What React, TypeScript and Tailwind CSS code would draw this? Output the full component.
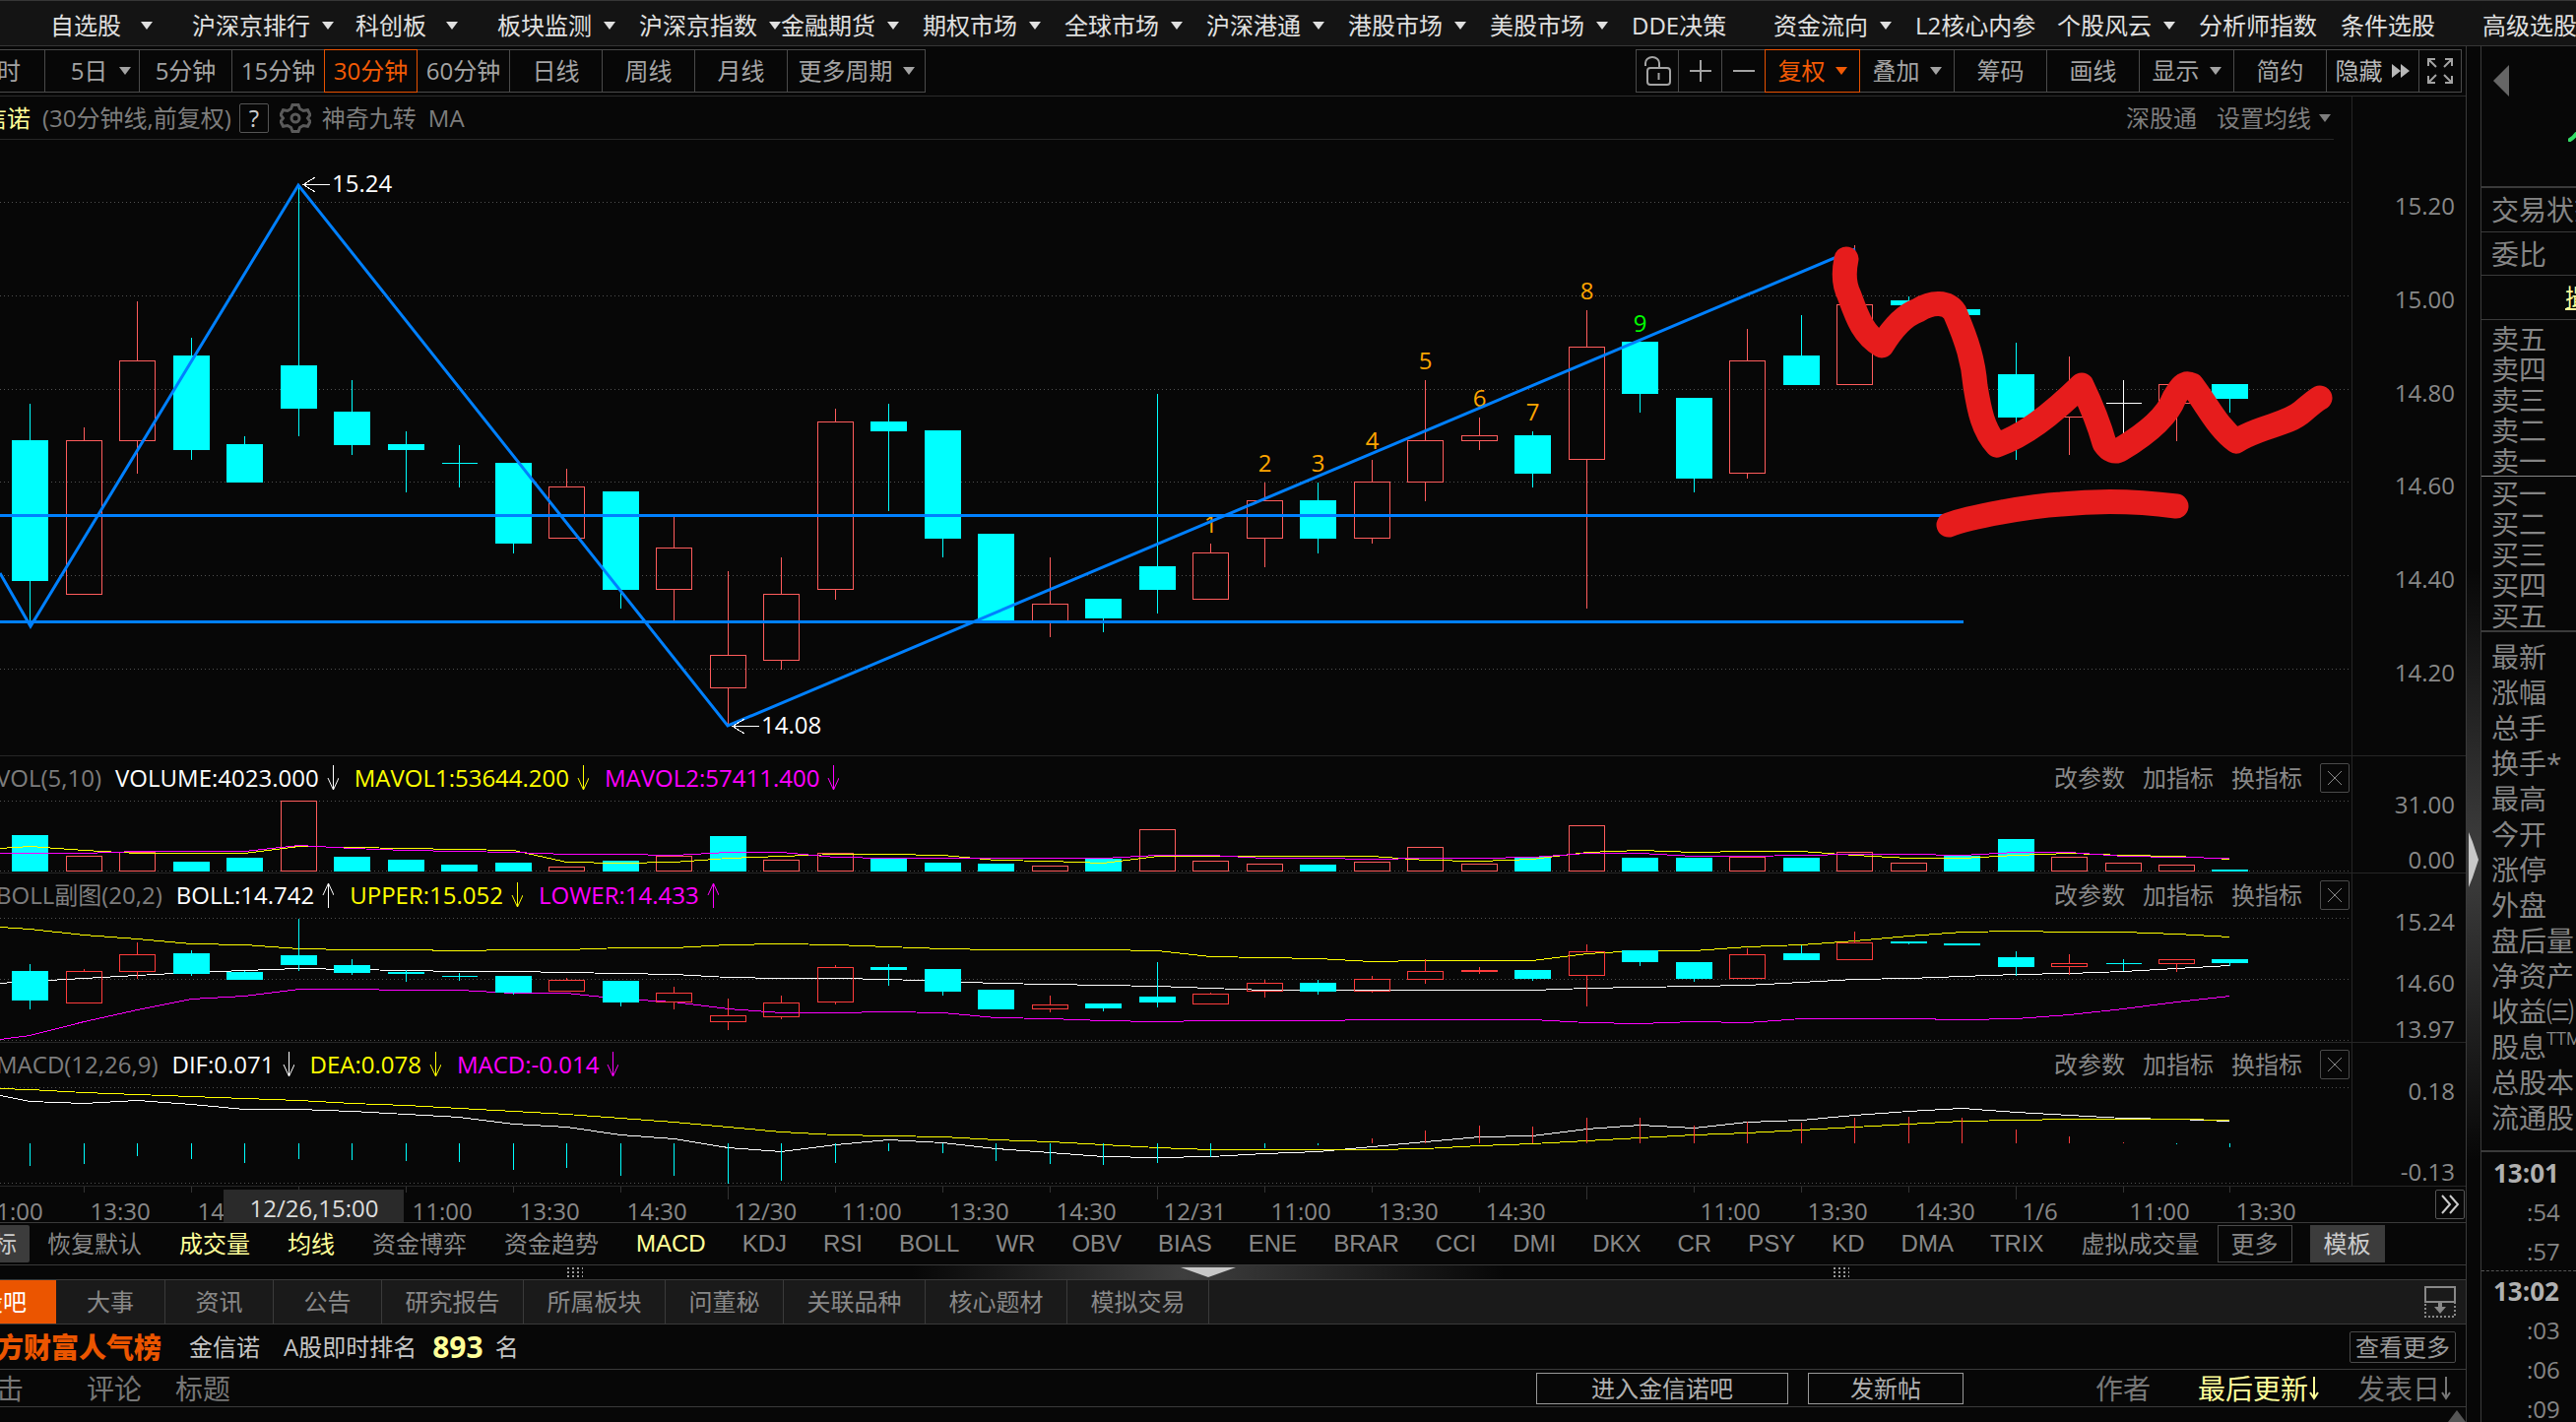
import React from 'react';

type Kind = 'up' | 'down' | 'flat';
type Candle = [Kind, number, number, number, number];

// kind, high, body top, body bottom, low
const CANDLES: Candle[] = [
  ['down', 14.77, 14.69, 14.39, 14.3], ['up', 14.72, 14.69, 14.36, 14.36], ['up', 14.99, 14.86, 14.69, 14.62],
  ['down', 14.91, 14.87, 14.67, 14.65], ['down', 14.7, 14.68, 14.6, 14.6], ['down', 15.24, 14.85, 14.76, 14.7],
  ['down', 14.82, 14.75, 14.68, 14.66], ['down', 14.71, 14.68, 14.67, 14.58], ['down', 14.68, 14.64, 14.64, 14.59],
  ['down', 14.64, 14.64, 14.47, 14.45], ['up', 14.63, 14.59, 14.48, 14.48], ['down', 14.58, 14.58, 14.37, 14.33],
  ['up', 14.53, 14.46, 14.37, 14.3], ['up', 14.41, 14.23, 14.16, 14.08], ['up', 14.44, 14.36, 14.22, 14.2],
  ['up', 14.76, 14.73, 14.37, 14.35], ['down', 14.77, 14.73, 14.71, 14.54], ['down', 14.71, 14.71, 14.48, 14.44],
  ['down', 14.49, 14.49, 14.3, 14.3], ['up', 14.44, 14.34, 14.3, 14.27], ['down', 14.35, 14.35, 14.31, 14.28],
  ['down', 14.79, 14.42, 14.37, 14.32], ['up', 14.47, 14.45, 14.35, 14.35], ['up', 14.6, 14.56, 14.48, 14.42],
  ['down', 14.6, 14.56, 14.48, 14.45], ['up', 14.65, 14.6, 14.48, 14.47], ['up', 14.82, 14.69, 14.6, 14.56],
  ['up', 14.74, 14.7, 14.69, 14.67], ['down', 14.71, 14.7, 14.62, 14.59], ['up', 14.97, 14.89, 14.65, 14.33],
  ['down', 14.9, 14.9, 14.79, 14.75], ['down', 14.78, 14.78, 14.61, 14.58], ['up', 14.93, 14.86, 14.62, 14.61],
  ['down', 14.96, 14.87, 14.81, 14.81], ['up', 15.11, 14.98, 14.81, 14.81], ['down', 15, 14.99, 14.98, 14.97],
  ['down', 14.98, 14.97, 14.96, 14.96], ['down', 14.9, 14.83, 14.74, 14.65], ['up', 14.87, 14.77, 14.74, 14.66],
  ['flat', 14.82, 14.77, 14.77, 14.7], ['up', 14.81, 14.81, 14.77, 14.69], ['down', 14.81, 14.81, 14.78, 14.75],
];

// a negative bar is a falling one
const VOLUMES = [
  -37, 16, 20, -10, -14, 72, -15, -12, -7, -9, 5, -11, 16, -36, 12, 19, -13, -9, -8, 6, -13,
  43, 11, 8, -7, 10, 25, 8, -15, 47, -14, -14, 15, -14, 20, 9, -16, -33, 15, 9, 7, -2,
];
const MAVOL1 = [
  26, 22, 19, 19, 19, 26, 25, 24, 23, 22, 10, 9, 10, 14, 16, 18, 18, 17, 12, 11, 9,
  16, 16, 16, 16, 16, 12, 11, 13, 20, 22, 20, 21, 21, 17, 14, 14, 17, 19, 17, 16, 13,
];
const MAVOL2 = [
  19, 19, 21, 21, 21, 27, 24, 22, 21, 20, 18, 18, 17, 20, 20, 15, 14, 14, 14, 14, 14,
  17, 17, 14, 14, 13, 14, 14, 15, 19, 19, 16, 16, 17, 18, 18, 17, 20, 20, 16, 15, 14,
];

const BOLL_UPPER = [
  12, 18, 22, 27, 28, 32, 33, 33, 34, 33, 33, 31, 31, 28, 27, 28, 30, 32, 33, 33, 33,
  34, 40, 41, 42, 45, 44, 44, 44, 37, 34, 34, 30, 28, 24, 19, 15, 14, 15, 15, 17, 20,
];
const BOLL_MID = [
  65, 62, 59, 56, 54, 52, 53, 54, 55, 55, 56, 57, 58, 61, 62, 62, 63, 65, 67, 68, 69,
  70, 72, 74, 74, 74, 74, 74, 74, 72, 71, 70, 69, 66, 63, 62, 60, 58, 57, 55, 52, 49,
];
const BOLL_LOWER = [
  120, 106, 94, 83, 80, 73, 73, 74, 74, 77, 77, 83, 86, 93, 97, 97, 96, 97, 102, 103, 105,
  106, 105, 105, 105, 104, 104, 104, 104, 107, 108, 106, 107, 103, 103, 103, 104, 103, 99, 93, 86, 80,
];

const DEA = [
  3, 6, 8, 10, 12, 14, 17, 19, 22, 25, 28, 32, 36, 41, 46, 49, 50, 51, 54, 56, 59,
  62, 64, 64, 64, 64, 63, 60, 58, 55, 52, 49, 47, 44, 41, 38, 35, 34, 33, 33, 33, 34,
];
const DIF = [
  15, 17, 14, 18, 23, 23, 25, 28, 31, 38, 41, 49, 53, 62, 66, 59, 54, 57, 63, 67, 71,
  72, 71, 68, 66, 61, 56, 51, 50, 43, 39, 42, 36, 34, 29, 25, 22, 26, 29, 32, 33, 35,
];
const MACD_BARS = [
  -23, -21, -13, -16, -20, -16, -17, -18, -19, -27, -25, -33, -33, -41, -38, -20, -8, -10, -18, -21, -22,
  -20, -14, -5, -2, 5, 13, 18, 17, 26, 26, 18, 22, 21, 26, 27, 26, 14, 7, 1, -1, -4,
];

const MENU = [
  { label: '自选股', arrow: true }, { label: '沪深京排行', arrow: true, wide: true }, { label: '科创板', arrow: true },
  { label: '板块监测', arrow: true }, { label: '沪深京指数', arrow: true }, { label: '金融期货', arrow: true },
  { label: '期权市场', arrow: true }, { label: '全球市场', arrow: true }, { label: '沪深港通', arrow: true },
  { label: '港股市场', arrow: true }, { label: '美股市场', arrow: true }, { label: 'DDE决策' },
  { label: '资金流向', arrow: true }, { label: 'L2核心内参' }, { label: '个股风云', arrow: true },
  { label: '分析师指数' }, { label: '条件选股' }, { label: '高级选股' },
];

const PERIODS = [
  { label: '5分钟' }, { label: '15分钟' }, { label: '30分钟', active: true }, { label: '60分钟' },
  { label: '日线' }, { label: '周线' }, { label: '月线' },
];

const INDICATORS = [
  'MACD', 'KDJ', 'RSI', 'BOLL', 'WR', 'OBV', 'BIAS', 'ENE', 'BRAR', 'CCI', 'DMI', 'DKX', 'CR', 'PSY', 'KD', 'DMA', 'TRIX',
];

const NEWS_TABS = [
  { label: '大事', w: 'w-[111px]' }, { label: '资讯', w: 'w-[110px]' }, { label: '公告', w: 'w-[110px]' },
  { label: '研究报告', w: 'w-36' }, { label: '所属板块', w: 'w-36' }, { label: '问董秘', w: 'w-[120px]' },
  { label: '关联品种', w: 'w-36' }, { label: '核心题材', w: 'w-36' }, { label: '模拟交易', w: 'w-36' },
];

const TIMES = [
  '11:00', '13:30', '14:30', '', '11:00', '13:30', '14:30', '12/30', '11:00', '13:30', '14:30',
  '12/31', '11:00', '13:30', '14:30', '', '11:00', '13:30', '14:30', '1/6', '11:00', '13:30',
];

const cx = (i: number) => Math.round(30.4 + 54.49 * i) + 0.5;
const priceY = (p: number) => Math.round(63 + (15.2 - p) * 474) + 0.5;
const bollY = (p: number) => Math.round(1 + (15.24 - p) * 97.6) + 0.5;

function points(values: number[], start: number, y = (v: number) => v) {
  return `0,${y(start) + 0.5} ` + values.map((v, i) => `${cx(i)},${y(v) + 0.5}`).join(' ');
}

function Caret({ className = '' }: { className?: string }) {
  return (
    <svg className={`w-3 h-2 shrink-0 ${className}`} viewBox="0 0 12 8" fill="currentColor" aria-hidden="true">
      <path d="M0 0h12L6 8z" />
    </svg>
  );
}

function GridLine({ y }: { y: number }) {
  return <line x1="0" x2="100%" y1={y + 0.5} y2={y + 0.5} stroke="#505050" strokeDasharray="1 3" />;
}

function Candles({ y, red }: { y: (p: number) => number; red: string }) {
  return (
    <g>
      {CANDLES.map(([kind, high, top, bottom, low], i) => {
        const x = cx(i);
        const color = kind === 'up' ? red : kind === 'down' || red === '#ff3c3c' ? '#00ffff' : '#ffffff';
        const h = y(bottom) - y(top);
        return (
          <g key={i} stroke={color}>
            <line x1={x} x2={x} y1={y(high)} y2={y(top)} />
            <line x1={x} x2={x} y1={y(bottom)} y2={y(low)} />
            {h < 1
              ? <line x1={x - 18} x2={x + 18} y1={y(top)} y2={y(top)} />
              : <rect x={x - 18} y={y(top)} width={36} height={h} fill={kind === 'down' ? color : 'none'} />}
          </g>
        );
      })}
    </g>
  );
}

function Panel({ title, labels, className, children }: {
  title: React.ReactNode;
  labels: [string, number][];
  className: string;
  children: React.ReactNode;
}) {
  return (
    <section className={`flex border-b border-[#262626] ${className}`}>
      <div className="flex-1 min-w-0 flex flex-col">
        {title}
        <svg className="block w-full flex-1 min-h-0" shapeRendering="crispEdges">{children}</svg>
      </div>
      <svg className="w-[116px] h-full shrink-0 border-l border-[#262626]" fill="#888888" fontSize="24">
        {labels.map(([text, y]) => (
          <text key={text} x="104" y={y} textAnchor="end">{text}</text>
        ))}
      </svg>
    </section>
  );
}

function Trend({ up }: { up?: boolean }) {
  return (
    <svg className="w-3 h-7 ml-2 mr-4 shrink-0" viewBox="0 0 12 28" fill="none" stroke="currentColor" aria-hidden="true">
      {up ? <path d="M6.500 27V2M1 14L6.500 2L12 14" /> : <path d="M6.500 1V26M1 14L6.500 26L12 14" />}
    </svg>
  );
}

function IndicatorTitle({ name, values }: { name: string; values: [string, string, boolean?][] }) {
  return (
    <header className="h-11 shrink-0 flex items-center -ml-1 text-[#7d7d7d]">
      <h2 className="mr-[14px]">{name}</h2>
      {values.map(([text, color, up]) => (
        <span key={text} className={`flex items-center ${color}`}>{text}<Trend up={up} /></span>
      ))}
      <div className="ml-auto flex items-center gap-[18px] pr-0.5 text-[#888888]">
        <button>改参数</button>
        <button>加指标</button>
        <button>换指标</button>
        <button aria-label="关闭" className="w-[30px] h-[30px] border border-[#4a4a4a] rounded-xs flex items-center justify-center">
          <svg className="w-4 h-4" viewBox="0 0 16 16" fill="none" stroke="currentColor"><path d="M1 1l14 14M15 1L1 15" /></svg>
        </button>
      </div>
    </header>
  );
}

const toolBtn = 'h-11 -ml-px border border-[#4a4a4a] flex items-center justify-center gap-2 shrink-0 relative';
const toolActive = 'z-10 border-[#e65100] text-[#f25a05]';

function Toolbar() {
  return (
    <div className="h-[51px] shrink-0 pt-[3px] pr-1 flex border-b border-[#2b2b2b] text-[#a3a3a3]">
      <button className={`${toolBtn} w-[47px] justify-end pr-6`}>分时</button>
      <button className={`${toolBtn} w-[97px] gap-3 pl-[18px]`}>5日<Caret /></button>
      {PERIODS.map(p => (
        <button key={p.label} className={`${toolBtn} w-[95px] ${p.active ? toolActive : ''}`}>{p.label}</button>
      ))}
      <button className={`${toolBtn} w-[141px] gap-[10px]`}>更多周期<Caret /></button>

      <div className="ml-auto flex">
        <button aria-label="锁定" className={`${toolBtn} w-11`}>
          <svg className="w-8 h-8" viewBox="0 0 32 32" fill="none" stroke="currentColor" strokeWidth="2">
            <rect x="6" y="13" width="23" height="17" rx="3" />
            <path d="M18 13V8a7 6 0 0 0-14 0v3M17.500 18v7" />
          </svg>
        </button>
        <button aria-label="放大" className={`${toolBtn} w-[45px]`}>
          <svg className="w-6 h-6" viewBox="0 0 24 24" stroke="currentColor" strokeWidth="2"><path d="M1 12h22M12 1v22" /></svg>
        </button>
        <button aria-label="缩小" className={`${toolBtn} w-[45px]`}>
          <svg className="w-6 h-6" viewBox="0 0 24 24" stroke="currentColor" strokeWidth="2"><path d="M1 12h22" /></svg>
        </button>
        <button className={`${toolBtn} ${toolActive} w-[97px] gap-[10px]`}>复权<Caret /></button>
        <button className={`${toolBtn} w-[97px] gap-[10px]`}>叠加<Caret /></button>
        <button className={`${toolBtn} w-[95px]`}>筹码</button>
        <button className={`${toolBtn} w-[95px]`}>画线</button>
        <button className={`${toolBtn} w-[97px] gap-[10px]`}>显示<Caret /></button>
        <button className={`${toolBtn} w-[95px]`}>简约</button>
        <button className={`${toolBtn} w-[95px] gap-1 text-[#b8b8b8]`}>
          隐藏
          <svg className="w-5 h-[14px]" viewBox="0 0 20 14" fill="currentColor"><path d="M1 0l9 7-9 7zM10 0l9 7-9 7z" /></svg>
        </button>
        <button aria-label="全屏" className={`${toolBtn} w-11`}>
          <svg className="w-7 h-7" viewBox="0 0 28 28" fill="none" stroke="currentColor" strokeWidth="2">
            <path d="M2 9V2h7M19 2h7v7M26 19v7h-7M9 26H2v-7M2 2l8 8M26 2l-8 8M26 26l-8-8M2 26l8-8" />
          </svg>
        </button>
      </div>
    </div>
  );
}

function PriceTitle() {
  return (
    <header className="h-11 shrink-0 flex items-center mr-[18px] border-b border-[#262626] text-[#7d7d7d]">
      <h1 className="-ml-[41px] mr-3 text-[#ffff99] shrink-0">金信诺</h1>
      <span className="mr-2">(30分钟线,前复权)</span>
      <button aria-label="帮助" className="w-[30px] h-[30px] border border-[#555555] rounded-xs leading-7 text-[#cccccc]">?</button>
      <button aria-label="设置" className="mx-[11px]">
        <svg className="w-8 h-8" viewBox="0 0 32 32" fill="none" stroke="#5a5a5a" strokeWidth="3">
          <path d="M13 2.500h6l1.500 4 3.500 2 4.500-.8 2.500 4.800-2.500 3.500 2.500 3.500-2.500 4.800-4.500-.8-3.500 2-1.500 4h-6l-1.500-4-3.500-2-4.500.8L1 19.500 3.500 16 1 12.500l2.500-4.800 4.500.8 3.500-2z" />
          <circle cx="16" cy="16" r="4" />
        </svg>
      </button>
      <span className="mr-3">神奇九转</span>
      <span>MA</span>
      <span className="ml-auto mr-5">深股通</span>
      <button className="flex items-center gap-2 mr-[3px]">设置均线<Caret /></button>
    </header>
  );
}

function PriceChart() {
  return (
    <Panel
      title={<PriceTitle />}
      className="h-[670px]"
      labels={[['15.20', 120], ['15.00', 215], ['14.80', 310], ['14.60', 404], ['14.40', 499], ['14.20', 594]]}
    >
      {[63, 158, 253, 347, 442, 537].map(y => <GridLine key={y} y={y} />)}
      <Candles y={priceY} red="#ff5c5c" />

      {/* 神奇九转 */}
      <g fontSize="24" textAnchor="middle">
        {[1, 2, 3, 4, 5, 6, 7, 8, 9].map(n => (
          <text key={n} x={cx(n + 21)} y={priceY(CANDLES[n + 21][1]) - 11} fill={n === 9 ? '#00ff00' : '#ffa500'}>{n}</text>
        ))}
      </g>

      <g stroke="#0080ff" strokeWidth="3" fill="none">
        <polyline points="0,440 31,494 303,46 739,595 1884,111" shapeRendering="auto" />
        <line x1="0" x2="1980" y1="381.500" y2="381.500" />
        <line x1="0" x2="1994" y1="489.500" y2="489.500" />
      </g>

      <g stroke="#ffffff" fill="none">
        <path d="M335 45.500H308M320 38L308 45.500L320 53" />
        <path d="M771 595.500H744M756 588L744 595.500L756 603" />
      </g>
      <g fill="#ffffff" fontSize="24">
        <text x="337" y="53">15.24</text>
        <text x="773" y="603">14.08</text>
      </g>

      <g stroke="#e61c1c" strokeWidth="25" strokeLinecap="round" strokeLinejoin="round" fill="none" shapeRendering="auto">
        <path d="M1875 121C1872 135 1873 148 1878 158C1886 180 1892 198 1911 209C1922 191 1934 178 1948 173C1962 164 1978 164 1985 175C1998 205 2004 225 2006 250C2010 275 2014 295 2028 310C2056 300 2082 280 2114 249C2124 270 2132 290 2137 308Q2145 320 2154 314C2184 296 2202 278 2208 262C2214 252 2218 245 2226 249C2242 270 2252 292 2271 306C2296 290 2322 290 2338 276Q2352 264 2356 262" />
        <path d="M1979 391C2000 383 2060 372 2093 370Q2150 364 2210 372" />
      </g>
    </Panel>
  );
}

function VolumeChart() {
  const y = (v: number) => 73 - v;
  return (
    <Panel
      title={
        <IndicatorTitle
          name="VOL(5,10)"
          values={[['VOLUME:4023.000', 'text-white'], ['MAVOL1:53644.200', 'text-[#ffff00]'], ['MAVOL2:57411.400', 'text-[#ff00ff]']]}
        />
      }
      className="h-[119px]"
      labels={[['31.00', 58], ['0.00', 114]]}
    >
      <GridLine y={1} />
      <GridLine y={72} />
      {VOLUMES.map((v, i) => (
        <rect
          key={i}
          x={cx(i) - 18}
          y={y(Math.abs(v)) + 0.5}
          width="36"
          height={Math.abs(v) - 1}
          stroke={v > 0 ? '#ff5c5c' : '#00ffff'}
          fill={v > 0 ? 'none' : '#00ffff'}
        />
      ))}
      <polyline points={points(MAVOL1, 24, y)} fill="none" stroke="#ffff00" />
      <polyline points={points(MAVOL2, 19, y)} fill="none" stroke="#ff00ff" />
    </Panel>
  );
}

function BollChart() {
  return (
    <Panel
      title={
        <IndicatorTitle
          name="BOLL副图(20,2)"
          values={[['BOLL:14.742', 'text-white', true], ['UPPER:15.052', 'text-[#ffff00]'], ['LOWER:14.433', 'text-[#ff00ff]', true]]}
        />
      }
      className="h-[172px]"
      labels={[['15.24', 58], ['14.60', 120], ['13.97', 167]]}
    >
      {[1, 63, 125].map(y => <GridLine key={y} y={y} />)}
      <g fill="none">
        <polyline points={points(BOLL_UPPER, 10)} stroke="#ffff00" />
        <polyline points={points(BOLL_MID, 67)} stroke="#ffffff" />
        <polyline points={points(BOLL_LOWER, 124)} stroke="#ff00ff" />
      </g>
      <Candles y={bollY} red="#ff3c3c" />
    </Panel>
  );
}

function MacdChart() {
  return (
    <Panel
      title={
        <IndicatorTitle
          name="MACD(12,26,9)"
          values={[['DIF:0.071', 'text-white'], ['DEA:0.078', 'text-[#ffff00]'], ['MACD:-0.014', 'text-[#ff00ff]']]}
        />
      }
      className="h-[146px]"
      labels={[['0.18', 58], ['-0.13', 140]]}
    >
      <GridLine y={1} />
      <GridLine y={98} />
      <g fill="none">
        <polyline points={points(DIF, 9)} stroke="#ffffff" />
        <polyline points={points(DEA, 2)} stroke="#ffff00" />
      </g>
      {MACD_BARS.map((v, i) => (
        <line key={i} x1={cx(i)} x2={cx(i)} y1={58} y2={58 - v} stroke={v > 0 ? '#ff3c3c' : '#00ffff'} />
      ))}
    </Panel>
  );
}

function TimeAxis() {
  return (
    <div className="h-[37px] shrink-0 flex items-center border-b border-[#3a3a3a]">
      <svg className="flex-1 min-w-0 h-full" fontSize="24" fill="#888888">
        {TIMES.map((t, i) => {
          const x = cx(i * 2 - 1);
          const day = t.includes('/') || i === 15;
          return (
            <g key={i}>
              <line x1={x} x2={x} y1="0" y2={day ? 13 : 6} stroke="#333333" />
              <text x={x + 6} y="34">{t}</text>
            </g>
          );
        })}
        <rect x="227" y="3" width="183" height="34" fill="#2a2a2a" />
        <text x="319" y="31" textAnchor="middle" fill="#dddddd">12/26,15:00</text>
      </svg>
      <button aria-label="更多" className="w-[30px] h-[30px] mr-px border border-[#555555] rounded-xs flex items-center justify-center text-[#cccccc]">
        <svg className="w-5 h-5" viewBox="0 0 20 20" fill="none" stroke="currentColor" strokeWidth="2"><path d="M2 1l8 9-8 9M10 1l8 9-8 9" /></svg>
      </button>
    </div>
  );
}

function IndicatorBar() {
  return (
    <div className="h-[43px] shrink-0 flex items-center gap-[38px] border-b border-[#3a3a3a] text-[#888888] overflow-hidden">
      <button className="h-[38px] w-[70px] -ml-10 -mr-5 pl-[9px] text-left bg-[#3c3c3c] text-[#cccccc] rounded-xs shrink-0">指标</button>
      <button className="shrink-0">恢复默认</button>
      <button className="shrink-0 text-[#ffff99]">成交量</button>
      <button className="shrink-0 text-[#ffff99]">均线</button>
      <button className="shrink-0">资金博弈</button>
      <button className="shrink-0">资金趋势</button>
      <div className="flex items-center gap-[37px] shrink-0 font-['Liberation_Sans',sans-serif]">
        {INDICATORS.map(name => (
          <button key={name} className={name === 'MACD' ? 'text-[#ffff99]' : ''}>{name}</button>
        ))}
      </div>
      <div className="flex items-center gap-[18px] shrink-0">
        <button>虚拟成交量</button>
        <button className="w-[76px] h-[38px] border border-[#4a4a4a]">更多</button>
        <button className="w-[76px] h-[38px] bg-[#3c3c3c] text-[#cccccc]">模板</button>
      </div>
    </div>
  );
}

function Grip() {
  return (
    <svg className="w-4 h-[10px]" viewBox="0 0 16 10" stroke="#999999" strokeWidth="2" strokeDasharray="2 3">
      <path d="M0 1h17M0 5h17M0 9h17" />
    </svg>
  );
}

function CommunityPanel() {
  return (
    <>
      <div className="h-[15px] shrink-0 flex items-center justify-between pl-[23%] pr-[25%] border-b border-[#3a3a3a] bg-linear-to-r from-transparent from-37% via-[#3e3e3e] via-48% to-transparent to-61%">
        <Grip />
        <svg className="w-14 h-[10px]" viewBox="0 0 56 10" fill="#c8c8c8"><path d="M0 0h56L28 10z" /></svg>
        <Grip />
      </div>

      <nav className="h-[45px] shrink-0 flex border-b border-[#3a3a3a] bg-[#1a1a1a] text-[#888888]">
        <button className="w-[57px] bg-[#eb5500] text-white flex items-center justify-end pr-[30px] shrink-0">股吧</button>
        {NEWS_TABS.map(t => (
          <button key={t.label} className={`border-r border-[#3a3a3a] shrink-0 ${t.w}`}>{t.label}</button>
        ))}
        <button aria-label="停靠" className="ml-auto mr-[10px]">
          <svg className="w-8 h-8" viewBox="0 0 32 32" fill="none" stroke="#888888" strokeWidth="2">
            <path d="M1 1h30v15H1z" />
            <path d="M1 18v13h30V17" strokeDasharray="2 2" />
            <path d="M16 16v6" strokeWidth="4" />
            <path d="M10 21h12l-6 7z" fill="#888888" stroke="none" />
          </svg>
        </button>
      </nav>

      <div className="h-[46px] shrink-0 flex items-center border-b border-[#3a3a3a] text-[#c4c4c4]">
        <strong className="-ml-8 mr-7 text-[28px] font-black text-[#eb5500] shrink-0">东方财富人气榜</strong>
        <span className="mr-6">金信诺</span>
        <span className="mr-4">A股即时排名</span>
        <strong className="mr-3 text-[30px] text-[#ffff99]">893</strong>
        <span>名</span>
        <button className="ml-auto mr-[10px] w-[108px] h-8 border border-[#4a4a4a] rounded-xs text-[#999999] flex items-center justify-center">查看更多</button>
      </div>

      <div className="h-[38px] shrink-0 flex items-center border-b border-[#3a3a3a] text-[28px] text-[#777777]">
        <span className="-ml-8 mr-16">点击</span>
        <span className="mr-[34px]">评论</span>
        <span>标题</span>
        <button className="ml-auto mr-5 w-64 h-8 border border-[#999999] text-2xl leading-7 text-[#b0b0b0]">进入金信诺吧</button>
        <button className="mr-[134px] w-[158px] h-8 border border-[#999999] text-2xl leading-7 text-[#b0b0b0]">发新帖</button>
        <button className="mr-12">作者</button>
        <button className="mr-[38px] flex items-center text-[#ffff99]">最后更新<SortArrow /></button>
        <button className="mr-[14px] flex items-center">发表日<SortArrow /></button>
      </div>

      <div className="flex-1 flex justify-end items-end overflow-hidden">
        <svg className="w-[18px] h-3" viewBox="0 0 18 12" fill="#555555"><path d="M9 0l9 12H0z" /></svg>
      </div>
    </>
  );
}

function SortArrow() {
  return (
    <svg className="w-3 h-6" viewBox="0 0 12 24" fill="none" stroke="currentColor" strokeWidth="2" aria-hidden="true">
      <path d="M6 0v22M2 16l4 6 4-6" />
    </svg>
  );
}

function Rows({ items, className }: { items: string[]; className: string }) {
  return (
    <ul>
      {items.map(t => <li key={t} className={`flex items-center pl-[10px] leading-7 ${className}`}>{t}</li>)}
    </ul>
  );
}

function QuotePanel() {
  return (
    <aside className="w-[97px] shrink-0 border-l border-[#3a3a3a] overflow-hidden whitespace-nowrap text-[28px] text-[#858585]">
      <div className="h-36 border-b-2 border-[#3a3a3a] flex justify-between pl-3 pt-[19px]">
        <svg className="w-4 h-8" viewBox="0 0 16 32" fill="#666666"><path d="M16 0v32L0 16z" /></svg>
        <svg className="w-2 h-[10px] mt-[68px]" viewBox="0 0 8 10" stroke="#33dd66" strokeWidth="4"><path d="M0 9Q5 7 9 1" /></svg>
      </div>
      <p className="h-[45px] pl-[10px] flex items-center border-b border-[#3a3a3a]">交易状态</p>
      <p className="h-11 pl-[10px] flex items-center border-b border-[#3a3a3a]">委比</p>
      <a href="#queue" className="h-[45px] pl-[85px] flex items-center border-b border-[#3a3a3a] text-[#ffff99] text-2xl underline">撮合</a>
      <div className="pt-[3px] border-b border-[#858585]">
        <Rows items={['卖五', '卖四', '卖三', '卖二', '卖一']} className="h-[31px]" />
      </div>
      <div className="pt-px border-b-2 border-[#3a3a3a]">
        <Rows items={['买一', '买二', '买三', '买四', '买五']} className="h-[31px]" />
      </div>
      <div className="pt-[7px] pb-[15px] border-b-2 border-[#3a3a3a]">
        <Rows items={['最新', '涨幅', '总手', '换手*', '最高', '今开', '涨停', '外盘', '盘后量', '净资产', '收益㈢']} className="h-9" />
        <p className="h-9 pl-[10px] flex items-center">股息<sup className="text-lg">TTM</sup></p>
        <Rows items={['总股本', '流通股']} className="h-9" />
      </div>
      <ol className="pt-px text-2xl">
        {['13:01', ':54', ':57', '13:02', ':03', ':06', ':09'].map(t => (
          <li
            key={t}
            className={`h-10 flex items-center ${t.startsWith(':') ? 'pl-[46px]' : 'pl-3 text-[26px] font-bold text-[#b0b0b0]'} ${t === ':57' ? 'border-b border-dashed border-[#555555]' : ''}`}
          >
            {t}
          </li>
        ))}
      </ol>
    </aside>
  );
}

export default function App() {
  return (
    <div className="h-screen flex flex-col overflow-hidden bg-[#070707] text-2xl leading-8 whitespace-nowrap font-['Open_Sans','Noto_Sans_CJK_SC',sans-serif]">
      <nav className="h-[47px] shrink-0 flex items-center pl-[51px] pt-[5px] border-y border-[#363636] bg-[#141414] text-[#e0e0e0] overflow-hidden">
        {MENU.map(m => (
          <button key={m.label} className={`flex items-center gap-3 shrink-0 ${m.wide ? 'w-[166px]' : 'w-36'}`}>
            {m.label}
            {m.arrow && <Caret className={m.label.length === 3 ? 'ml-2' : ''} />}
          </button>
        ))}
      </nav>

      <div className="flex-1 min-h-0 flex">
        <main className="flex-1 min-w-0 flex flex-col border-r border-[#3a3a3a] overflow-hidden">
          <Toolbar />
          <PriceChart />
          <VolumeChart />
          <BollChart />
          <MacdChart />
          <TimeAxis />
          <IndicatorBar />
          <CommunityPanel />
        </main>

        <div className="w-[14px] shrink-0 flex items-center justify-center pt-[254px] bg-linear-to-b from-transparent from-38% via-[#3e3e3e] via-59% to-transparent to-81%">
          <svg className="w-[10px] h-14" viewBox="0 0 10 56" fill="#c8c8c8"><path d="M0 0l4 10 6 18-6 18-4 10z" /></svg>
        </div>

        <QuotePanel />
      </div>
    </div>
  );
}
